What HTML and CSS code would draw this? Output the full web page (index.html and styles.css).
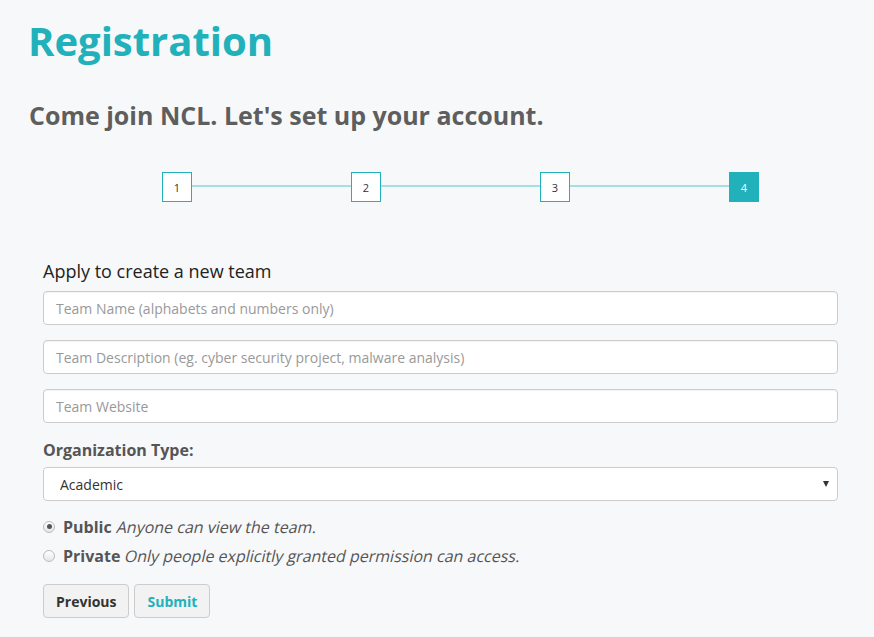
FILE: index.html
```html
<!DOCTYPE html>
<html>
<head>
<meta charset="utf-8">
<link rel="stylesheet" href="styles.css">
</head>
<body>
<div class="page">
  <h1 class="title">Registration</h1>
  <h2 class="subtitle">Come join NCL. Let's set up your account.</h2>
  <div class="steps">
    <div class="step">1</div>
    <div class="line"></div>
    <div class="step">2</div>
    <div class="line"></div>
    <div class="step">3</div>
    <div class="line"></div>
    <div class="step active">4</div>
  </div>
  <form class="form">
    <div class="form-heading">Apply to create a new team</div>
    <input class="field" type="text" placeholder="Team Name (alphabets and numbers only)">
    <input class="field" type="text" placeholder="Team Description (eg. cyber security project, malware analysis)">
    <input class="field" type="text" placeholder="Team Website">
    <div class="label">Organization Type:</div>
    <div class="select">
      <span>Academic</span>
      <span class="arrow"></span>
    </div>
    <div class="radios">
      <label class="radio"><span class="dot checked"></span><b>Public</b><i>Anyone can view the team.</i></label>
      <label class="radio"><span class="dot"></span><b>Private</b><i>Only people explicitly granted permission can access.</i></label>
    </div>
    <div class="buttons">
      <button type="button" class="btn">Previous</button>
      <button type="button" class="btn btn-submit">Submit</button>
    </div>
  </form>
</div>
</body>
</html>
```

FILE: styles.css
```css
* { box-sizing: border-box; }
html, body { margin: 0; padding: 0; }
body {
  background: #f7f8fa;
  font-family: "Open Sans", "DejaVu Sans", sans-serif;
  color: #555;
}
.page { padding: 0 29px; }
.title {
  margin: 0;
  padding-top: 13px;
  font-size: 40px;
  line-height: 56px;
  font-weight: 700;
  color: #20b1bb;
  margin-left: -1px;
}
.subtitle {
  margin: 30px 0 0;
  font-size: 25px;
  line-height: 32px;
  font-weight: 700;
  color: #5e5e5e;
}
.steps {
  display: flex;
  align-items: center;
  margin: 41px 0 0 133px;
  width: 597px;
}
.step {
  width: 30px;
  height: 30px;
  border: 1px solid #20b1bb;
  background: #fff;
  color: #333;
  font-size: 11px;
  display: flex;
  align-items: center;
  justify-content: center;
  flex: none;
}
.step.active { background: #20b1bb; color: #fff; }
.line { flex: 1; height: 2px; background: #a5dfe3; margin-top: -2px; }
.form { margin: 57px 0 0 14px; width: 795px; }
.form-heading {
  font-size: 18px;
  line-height: 24px;
  color: #222;
  margin-bottom: 8px;
}
.field {
  display: block;
  width: 100%;
  height: 34px;
  border: 1px solid #ccc;
  border-radius: 4px;
  background: #fff;
  padding: 0 12px;
  font-family: "Open Sans", "DejaVu Sans", sans-serif;
  font-size: 14px;
  margin-bottom: 15px;
  box-shadow: inset 0 1px 1px rgba(0,0,0,0.05);
}
.field::placeholder { color: #999; }
.label {
  font-size: 16px;
  font-weight: 700;
  line-height: 22px;
  color: #555;
  margin-top: 16px;
  margin-bottom: 6px;
}
.select {
  height: 34px;
  border: 1px solid #ccc;
  border-radius: 4px;
  background: #fff;
  display: flex;
  align-items: center;
  justify-content: space-between;
  padding: 0 8px 0 16px;
  font-size: 14px;
  color: #333;
}
.arrow {
  width: 0; height: 0;
  border-left: 3.5px solid transparent;
  border-right: 3.5px solid transparent;
  border-top: 6px solid #333;
}
.radios { margin-top: 12px; }
.radio {
  display: flex;
  align-items: center;
  font-size: 16px;
  line-height: 29px;
  color: #555;
}
.radio b { margin-right: 5px; }
.radio i {
  font-style: normal;
  display: inline-block;
  transform: skewX(-13deg);
}
.dot {
  width: 12px; height: 12px;
  border-radius: 50%;
  border: 1px solid #bbb;
  background: linear-gradient(#fff, #e6e6e6);
  margin-right: 8px;
  position: relative;
  top: -1px;
}
.dot.checked::after {
  content: "";
  position: absolute;
  left: 2.5px; top: 2.5px;
  width: 5px; height: 5px;
  border-radius: 50%;
  background: #555;
}
.buttons { margin-top: 13px; display: flex; gap: 5px; }
.btn {
  height: 34px;
  padding: 0 12px;
  border: 1px solid #ccc;
  border-radius: 4px;
  background: #f2f2f2;
  font-family: "Open Sans", "DejaVu Sans", sans-serif;
  font-size: 14px;
  font-weight: 700;
  color: #333;
}
.btn-submit { color: #20b1bb; }
```
